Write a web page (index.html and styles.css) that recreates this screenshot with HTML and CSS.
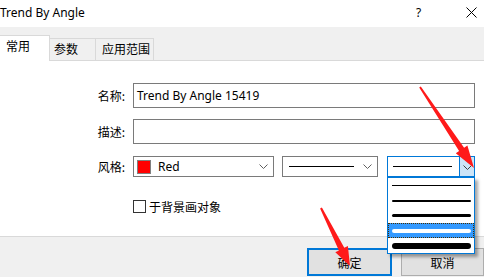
FILE: index.html
```html
<!DOCTYPE html>
<html>
<head>
<meta charset="utf-8">
<link rel="stylesheet" href="styles.css">
</head>
<body>
<div class="window">
  <div class="titlebar">
    <span class="title">Trend By Angle</span>
    <span class="help">?</span>
    <span class="close"><svg width="11" height="11" viewBox="0 0 11 11"><path d="M0.5 0.5L10.5 10.5M10.5 0.5L0.5 10.5" stroke="#000" stroke-width="1"/></svg></span>
  </div>
  <div class="tabs">
    <div class="tab active">常用</div>
    <div class="tab">参数</div>
    <div class="tab">应用范围</div>
  </div>
  <div class="content">
    <div class="row name-row">
      <span class="label">名称:</span>
      <div class="input">Trend By Angle 15419</div>
    </div>
    <div class="row desc-row">
      <span class="label">描述:</span>
      <div class="input"></div>
    </div>
    <div class="row style-row">
      <span class="label">风格:</span>
      <div class="combo color-combo">
        <span class="swatch"></span><span class="combo-text">Red</span>
        <span class="chev"><svg width="9" height="5" viewBox="0 0 9 5"><path d="M0.5 0.5L4.5 4.5L8.5 0.5" fill="none" stroke="#606060"/></svg></span>
      </div>
      <div class="combo line-combo">
        <span class="line-sample"></span>
        <span class="chev"><svg width="9" height="5" viewBox="0 0 9 5"><path d="M0.5 0.5L4.5 4.5L8.5 0.5" fill="none" stroke="#606060"/></svg></span>
      </div>
      <div class="combo width-combo">
        <span class="line-sample"></span>
        <span class="drop-btn"><svg width="9" height="5" viewBox="0 0 9 5"><path d="M0.5 0.5L4.5 4.5L8.5 0.5" fill="none" stroke="#404040"/></svg></span>
      </div>
    </div>
    <div class="row check-row">
      <span class="checkbox"></span><span class="check-label">于背景画对象</span>
    </div>
  </div>
  <div class="footer">
    <div class="btn btn-ok">确定</div>
    <div class="btn btn-cancel">取消</div>
  </div>

  <div class="dropdown-list">
    <div class="item"><span class="w w1"></span></div>
    <div class="item"><span class="w w2"></span></div>
    <div class="item"><span class="w w3"></span></div>
    <div class="item selected"><span class="w w4"></span></div>
    <div class="item"><span class="w w5"></span></div>
  </div>

  <svg class="arrows" width="484" height="277" viewBox="0 0 484 277">
    <polygon fill="#ff1a1a" points="420.8,86.4 464.1,147.7 467.4,145.5 474,168 455.8,153.3 459.1,151.1 419.2,87.6"/>
    <polygon fill="#ff1a1a" points="321.9,207.6 344.3,247.8 347.9,246 350,266 335.3,252.2 338.9,250.4 320.1,208.4"/>
  </svg>
</div>
</body>
</html>
```
FILE: styles.css
```css
* { box-sizing: border-box; }
html, body { margin: 0; padding: 0; }
body {
  width: 484px;
  height: 277px;
  overflow: hidden;
  font-family: "Noto Sans", "Noto Sans CJK SC", sans-serif;
  font-size: 12px;
  color: #000;
  background: #fff;
}
.window {
  position: relative;
  width: 484px;
  height: 277px;
  display: flex;
  flex-direction: column;
}
.titlebar {
  height: 27px;
  display: flex;
  align-items: center;
  background: #fff;
  padding-bottom: 3px;
}
.title {
  flex: 1;
  padding-left: 0;
  font-size: 12px;
}
.help {
  width: 14px;
  margin-right: 36px;
  font-size: 12px;
}
.close {
  width: 12px;
  margin-right: 6px;
  display: flex;
  padding-top: 1px;
}
.tabs {
  height: 34px;
  background: #f0f0f0;
  border-bottom: 1px solid #d9d9d9;
  display: flex;
  align-items: flex-end;
}
.tab {
  height: 22px;
  border-top: 1px solid #d9d9d9;
  border-right: 1px solid #d9d9d9;
  padding: 0 0 0 4px;
  line-height: 20px;
  font-family: "Noto Sans CJK SC", sans-serif;
  font-size: 12px;
  white-space: nowrap;
}
.tab:nth-child(2) { width: 46px; }
.tab:nth-child(3) { width: 58px; padding-left: 6px; }
.tab.active {
  width: 50px;
  height: 26px;
  background: #fff;
  margin-bottom: -1px;
  padding-left: 6px;
  line-height: 20px;
}
.content {
  height: 175px;
  background: #fff;
  padding-top: 22px;
  display: flex;
  flex-direction: column;
}
.row {
  display: flex;
  align-items: center;
}
.label {
  width: 126px;
  text-align: right;
  padding-right: 1px;
  margin-right: 7px;
  font-family: "Noto Sans CJK SC", sans-serif;
}
.input {
  width: 342px;
  height: 25px;
  border: 1px solid #7a7a7a;
  padding-left: 3px;
  display: flex;
  align-items: center;
}
.desc-row { margin-top: 11px; }
.style-row { margin-top: 12px; }
.combo {
  height: 21px;
  border: 1px solid #7a7a7a;
  display: flex;
  align-items: center;
  position: relative;
}
.color-combo { width: 141px; padding-left: 3px; }
.swatch {
  width: 14px;
  height: 14px;
  background: #ff0000;
  border: 1px solid #808080;
}
.combo-text { margin-left: 7px; flex: 1; }
.chev {
  display: flex;
  margin-right: 5px;
}
.line-combo { width: 96px; margin-left: 8px; padding-left: 6px; }
.line-combo .line-sample {
  width: 66px;
  height: 1px;
  background: #000;
  margin-right: 9px;
}
.width-combo {
  width: 88px;
  margin-left: 9px;
  border-color: #0078d7;
  padding-left: 5px;
}
.width-combo .line-sample {
  width: 59px;
  height: 1px;
  background: #000;
  flex: none;
}
.drop-btn {
  position: absolute;
  right: -1px;
  top: -1px;
  width: 16px;
  height: 21px;
  background: #cce4f7;
  border: 1px solid #0078d7;
  display: flex;
  align-items: center;
  justify-content: center;
  padding-top: 1px;
}
.check-row {
  margin-top: 21px;
  padding-left: 133px;
}
.checkbox {
  width: 13px;
  height: 13px;
  border: 1px solid #333;
  background: #fff;
}
.check-label {
  margin-left: 3px;
  font-family: "Noto Sans CJK SC", sans-serif;
}
.footer {
  flex: 1;
  background: #f0f0f0;
  border-top: 1px solid #d9d9d9;
  display: flex;
  padding-top: 11px;
  padding-left: 307px;
}
.btn {
  height: 28px;
  background: #e1e1e1;
  border: 1px solid #adadad;
  display: flex;
  align-items: center;
  justify-content: center;
  font-family: "Noto Sans CJK SC", sans-serif;
}
.btn-ok {
  width: 85px;
  border: 2px solid #0078d7;
}
.btn-cancel {
  width: 83px;
  margin-left: 9px;
}
.dropdown-list {
  position: absolute;
  left: 387px;
  top: 177px;
  width: 88px;
  height: 77px;
  background: #fff;
  border: 1px solid #0078d7;
  box-shadow: 3px 3px 3px rgba(0,0,0,0.35);
  display: flex;
  flex-direction: column;
}
.item {
  height: 15px;
  display: flex;
  align-items: center;
  padding: 0 3px 0 4px;
}
.item.selected {
  background: #3399ff;
  outline: 1px dotted #4a3000;
  outline-offset: -1px;
}
.w {
  flex: 1;
  background: #000;
  border-radius: 2px;
}
.w1 { height: 1px; border-radius: 0; }
.w2 { height: 2px; }
.w3 { height: 3px; }
.w4 { height: 4px; background: #fff; }
.w5 { height: 6px; border-radius: 3px; }
.arrows {
  position: absolute;
  left: 0;
  top: 0;
  pointer-events: none;
}
```
